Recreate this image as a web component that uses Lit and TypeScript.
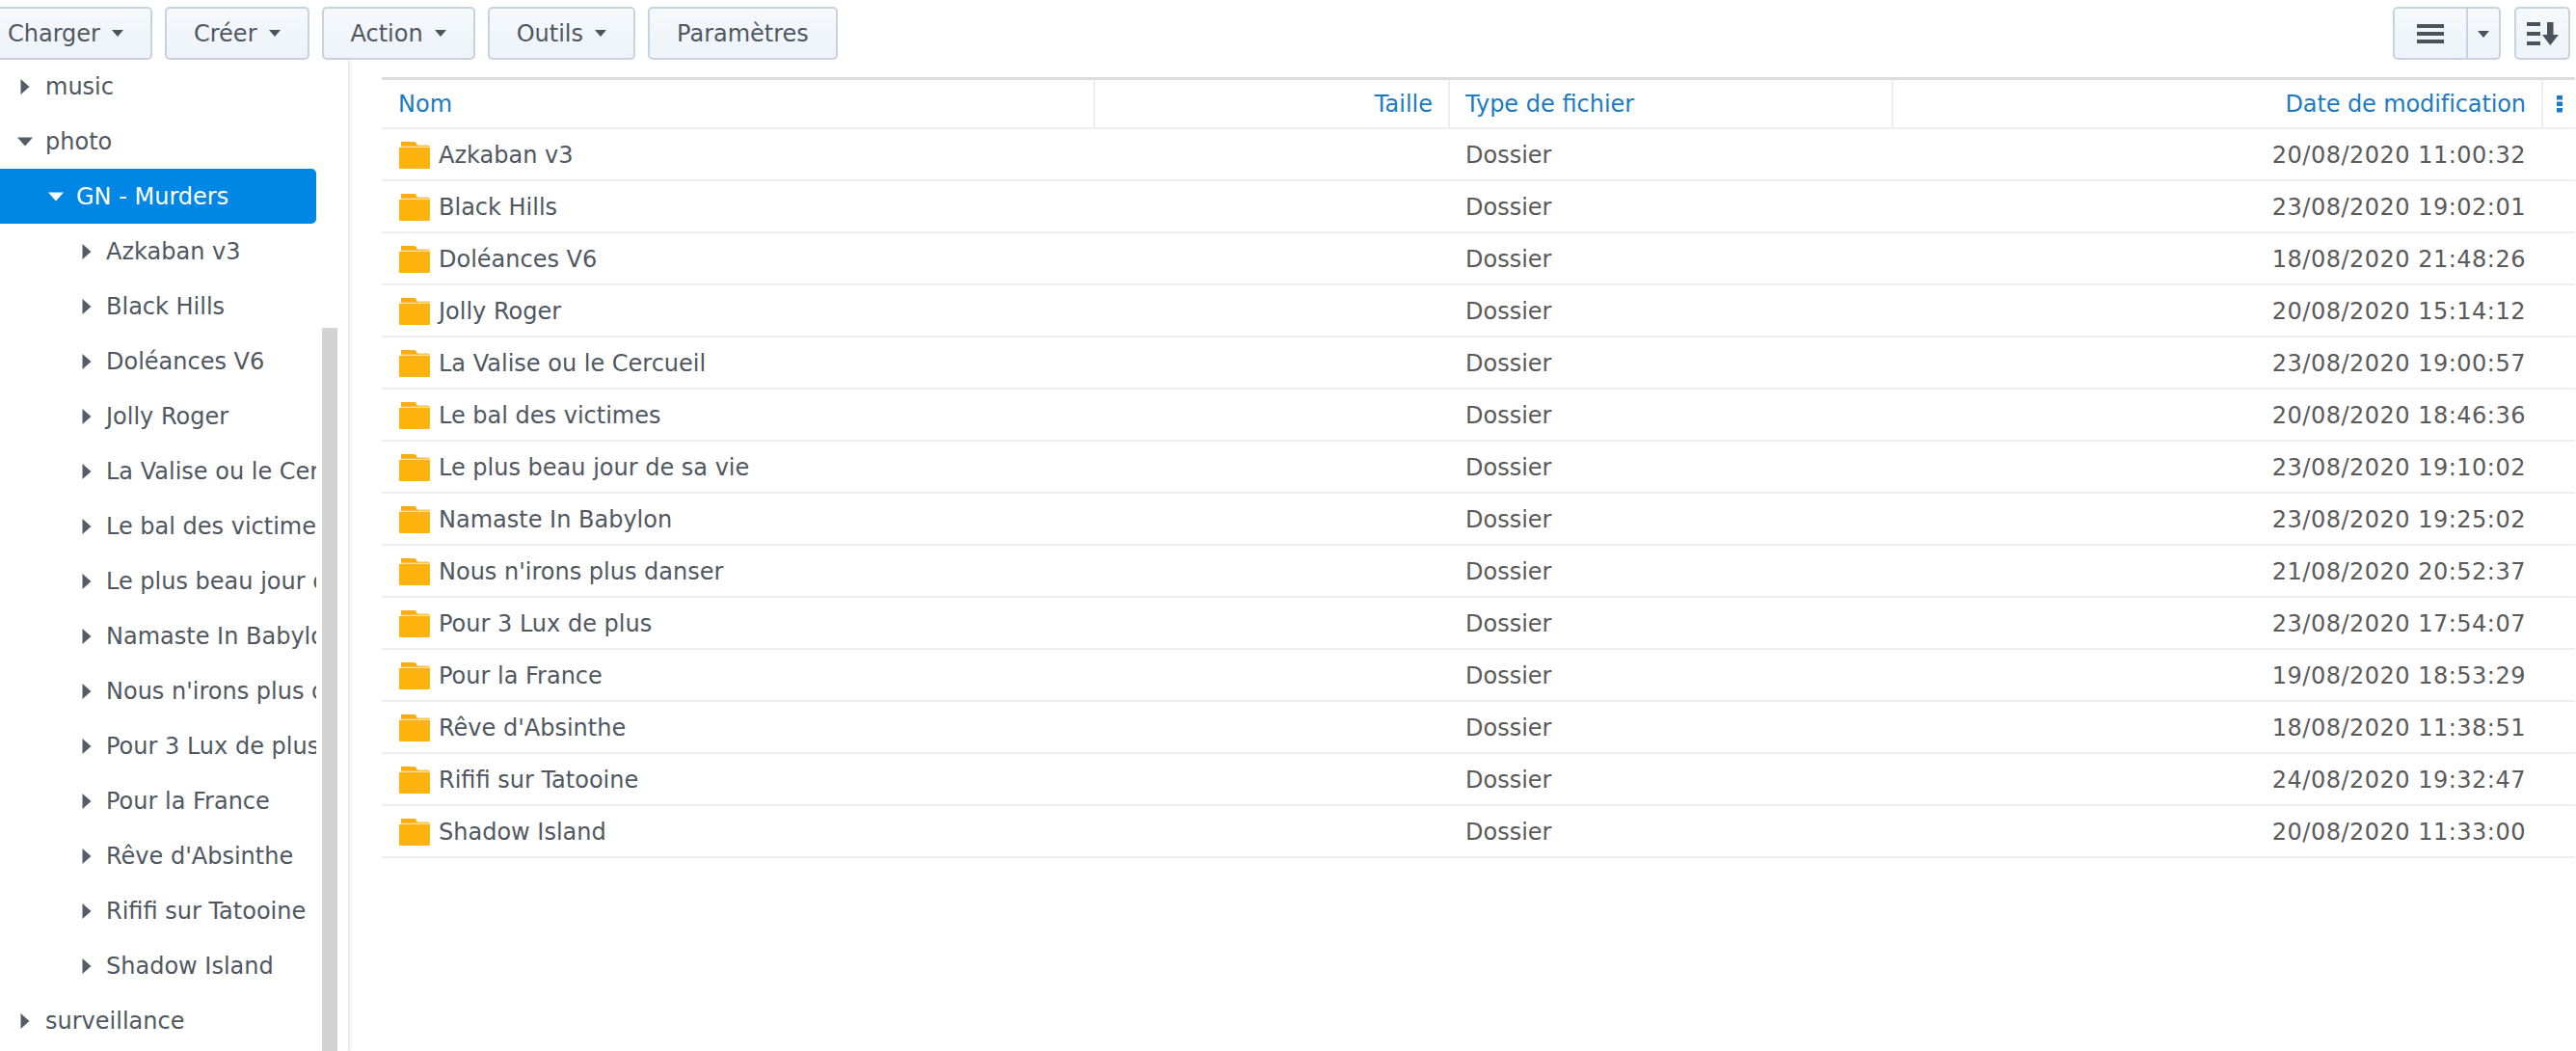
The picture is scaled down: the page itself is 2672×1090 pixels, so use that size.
import { LitElement, html, css, svg } from "lit";
import { customElement } from "lit/decorators.js";

const items: [string, string][] = [
  ["Azkaban v3", "20/08/2020 11:00:32"],
  ["Black Hills", "23/08/2020 19:02:01"],
  ["Doléances V6", "18/08/2020 21:48:26"],
  ["Jolly Roger", "20/08/2020 15:14:12"],
  ["La Valise ou le Cercueil", "23/08/2020 19:00:57"],
  ["Le bal des victimes", "20/08/2020 18:46:36"],
  ["Le plus beau jour de sa vie", "23/08/2020 19:10:02"],
  ["Namaste In Babylon", "23/08/2020 19:25:02"],
  ["Nous n'irons plus danser", "21/08/2020 20:52:37"],
  ["Pour 3 Lux de plus", "23/08/2020 17:54:07"],
  ["Pour la France", "19/08/2020 18:53:29"],
  ["Rêve d'Absinthe", "18/08/2020 11:38:51"],
  ["Rififi sur Tatooine", "24/08/2020 19:32:47"],
  ["Shadow Island", "20/08/2020 11:33:00"],
];

const caret = html`<svg class="caret" width="12" height="7" viewBox="0 0 12 7"><path d="M0 0h12L6 7z" fill="#4d535c"/></svg>`;
const right = svg`<path d="M3.500 0l9 8-9 8z"/>`;
const down = svg`<path d="M0 3.500h16L8 12.500z"/>`;
const folder = html`<svg class="folder" width="32" height="28" viewBox="0 0 32 28"><path d="M2 5.500V2q0-2 2-2h11q2 0 3 2l1 1.500h11q2 0 2 2z" fill="#ffc04d"/><path d="M2 0h13q2 0 3 2l1 2H2z" fill="#ffab0a"/><path d="M0 6h32v21q0 1-1 1H1q-1 0-1-1z" fill="#ffb30f"/></svg>`;

@customElement("app-root")
export class AppRoot extends LitElement {
  static styles = css`
    :host { display: block; width: 2672px; height: 1090px; overflow: hidden; background: #fff; font-family: "DejaVu Sans", sans-serif; color: #505761; position: relative; }
    .toolbar { height: 62px; box-sizing: border-box; padding-top: 7px; display: flex; gap: 13px; margin-left: -22px; width: 2688px; }
    .btn { height: 55px; box-sizing: border-box; border: 2px solid #c9d3dd; border-radius: 5px; background: linear-gradient(#f6f9fc, #edf3f8); display: flex; align-items: center; justify-content: center; font-size: 24px; color: #505761; padding: 0 28px; gap: 12px; }
    .spacer { flex: 1; }
    .split { padding: 0; gap: 0; width: 112px; }
    .split .a { width: 74px; height: 100%; display: flex; align-items: center; justify-content: center; border-right: 2px solid #c9d3dd; }
    .split .b { flex: 1; display: flex; align-items: center; justify-content: center; padding-top: 2px; }
    .sort { padding: 0; width: 58px; margin-left: 1px; }
    .main { display: flex; height: 1028px; }
    .side { width: 363px; flex: none; overflow: hidden; position: relative; border-right: 2px solid #ececec; box-shadow: 2px 0 3px rgba(0,0,0,.04); box-sizing: border-box; }
    .tree { margin-top: -1px; width: 328px; overflow: hidden; }
    .node { height: 57px; display: flex; align-items: center; font-size: 24px; white-space: nowrap; border-radius: 0 5px 5px 0; }
    .node svg { flex: none; fill: #555c68; }
    .l0 { padding-left: 18px; }
    .l1 { padding-left: 50px; }
    .l2 { padding-left: 82px; }
    .arrow { width: 29px; flex: none; display: flex; }
    .l2 .arrow { width: 28px; }
    .sel { background: #0086e5; color: #fff; }
    .sel svg { fill: #fff; }
    .thumb { position: absolute; left: 334px; top: 340px; bottom: 0; width: 16px; background: #d3d3d3; }
    .table { flex: 1; margin: 18px 1px 0 33px; }
    .row { display: grid; grid-template-columns: 740px 368px 460px 674px 33px; height: 54px; box-sizing: border-box; border-bottom: 2px solid #eceef0; align-items: center; font-size: 24px; padding-top: 1px; }
    .head { border-top: 3px solid #dcdcdc; color: #1a7bc4; padding-top: 0; }
    .head > div { height: 100%; display: flex; align-items: center; box-sizing: border-box; border-right: 2px solid #eceef0; }
    .head > div:last-child { border: 0; justify-content: center; }
    .c { padding: 0 16px; white-space: nowrap; }
    .first { padding-left: 17px; }
    .name { display: flex; align-items: center; gap: 9px; padding: 0 0 0 18px; }
    .name span { padding-top: 1px; }
    .r { justify-content: flex-end; text-align: right; }
    .plain { color: #5a5a5a; padding-top: 1px; }
    .date { color: #5a5a5a; letter-spacing: 0.5px; padding: 1px 18px 0 0; }
    .narrow { letter-spacing: -0.1px; }
    .dots { fill: #1a7bc4; }
  `;

  private arrow(d: typeof right) {
    return html`<span class="arrow"><svg width="16" height="16" viewBox="0 0 16 16">${d}</svg></span>`;
  }

  render() {
    return html`
      <div class="toolbar">
        ${["Charger", "Créer", "Action", "Outils"].map((t) => html`<div class="btn">${t}${caret}</div>`)}
        <div class="btn">Paramètres</div>
        <div class="spacer"></div>
        <div class="btn split">
          <div class="a"><svg width="28" height="20" viewBox="0 0 28 20" fill="#4d535c"><rect width="28" height="4"/><rect y="8" width="28" height="4"/><rect y="16" width="28" height="4"/></svg></div>
          <div class="b">${caret}</div>
        </div>
        <div class="btn sort"><svg width="33" height="24" viewBox="0 0 33 24" fill="#4d535c"><rect width="14" height="4"/><rect y="10" width="14" height="4"/><rect y="20" width="14" height="4"/><path d="M21 0h6.500v13H33L24.250 24 16 13h5z"/></svg></div>
      </div>
      <div class="main">
        <div class="side">
          <div class="tree">
            <div class="node l0">${this.arrow(right)}music</div>
            <div class="node l0">${this.arrow(down)}photo</div>
            <div class="node l1 sel">${this.arrow(down)}GN - Murders</div>
            ${items.map(([n]) => html`<div class="node l2">${this.arrow(right)}${n}</div>`)}
            <div class="node l0">${this.arrow(right)}surveillance</div>
          </div>
        </div>
        <div class="table">
          <div class="row head">
            <div class="c first">Nom</div>
            <div class="c r">Taille</div>
            <div class="c">Type de fichier</div>
            <div class="c r narrow">Date de modification</div>
            <div><svg class="dots" width="6" height="18" viewBox="0 0 6 18"><rect width="6" height="4.500"/><rect y="6.500" width="6" height="4.500"/><rect y="13" width="6" height="4.500"/></svg></div>
          </div>
          ${items.map(([n, d]) => html`<div class="row">
            <div class="name">${folder}<span>${n}</span></div>
            <div></div>
            <div class="c plain">Dossier</div>
            <div class="r date">${d}</div>
            <div></div>
          </div>`)}
        </div>
      </div>
      <div class="thumb"></div>
    `;
  }
}
